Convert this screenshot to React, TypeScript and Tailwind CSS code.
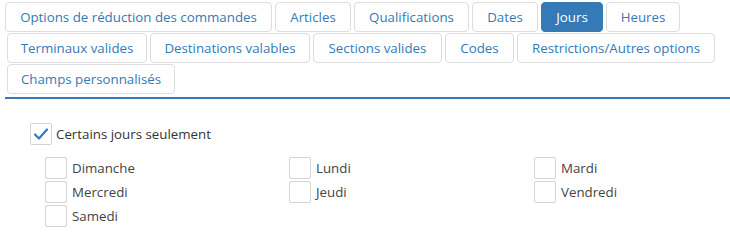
import { useState } from 'react'

const rows = [
    [
        { label: 'Options de réduction des commandes', w: 'w-[267px]' },
        { label: 'Articles', w: 'w-[76px]' },
        { label: 'Qualifications', w: 'w-[115px]' },
        { label: 'Dates', w: 'w-[66px]' },
        { label: 'Jours', w: 'w-[62px]' },
        { label: 'Heures', w: 'w-[74px]' },
    ],
    [
        { label: 'Terminaux valides', w: 'w-[140px]' },
        { label: 'Destinations valables', w: 'w-[160px]' },
        { label: 'Sections valides', w: 'w-[129px]' },
        { label: 'Codes', w: 'w-[69px]' },
        { label: 'Restrictions/Autres options', w: 'w-[198px]' },
    ],
    [{ label: 'Champs personnalisés', w: 'w-[168px]' }],
]

const days = ['Dimanche', 'Lundi', 'Mardi', 'Mercredi', 'Jeudi', 'Vendredi', 'Samedi']

export default function App() {
    const [active, setActive] = useState('Jours')
    const [some, setSome] = useState(true)
    const [checked, setChecked] = useState<Record<string, boolean>>({})

    return (
        <div className="w-[730px] h-[246px] bg-white pt-[2px] pl-[5px] font-['Segoe_UI','Open_Sans','Noto_Sans',sans-serif] text-[13.3px]">
            {/* Tabs */}
            <div className="flex flex-col gap-[1px]">
                {rows.map((row, i) => (
                    <div key={i} className={`flex gap-[3px] ${i > 0 ? 'ml-[2px]' : ''}`}>
                        {row.map(t => (
                            <button
                                key={t.label}
                                onClick={() => setActive(t.label)}
                                className={`${t.w} h-[30px] shrink-0 rounded-[4px] border flex items-center justify-center whitespace-nowrap leading-none pt-[1px] ${
                                    active === t.label
                                        ? 'bg-[#337ab7] border-[#337ab7] text-white'
                                        : 'bg-white border-[#dddddd] text-[#337ab7]'
                                }`}
                            >
                                {t.label}
                            </button>
                        ))}
                    </div>
                ))}
            </div>
            <div className="mt-[3px] h-[2px] bg-[#337ab7]" />

            {/* Contenu */}
            <div className="pt-[24px] pl-[25px]">
                <label className="flex items-center gap-[4px] text-[#333333]">
                    <Box checked={some} onClick={() => setSome(!some)} />
                    <span className="pt-[2px]">Certains jours seulement</span>
                </label>
                <div className="mt-[12px] ml-[15px] grid grid-cols-[244px_245px_1fr] gap-y-[2px]">
                    {days.map(d => (
                        <label key={d} className="flex items-center gap-[5px] text-[#444444]">
                            <Box checked={!!checked[d]} onClick={() => setChecked({ ...checked, [d]: !checked[d] })} />
                            <span className="pt-[2px]">{d}</span>
                        </label>
                    ))}
                </div>
            </div>
        </div>
    )
}

function Box({ checked, onClick }: { checked: boolean; onClick: () => void }) {
    return (
        <span
            onClick={onClick}
            className="w-[22px] h-[22px] shrink-0 rounded-[2px] border border-[#d4d4d4] bg-white flex items-center justify-center"
        >
            {checked && (
                <svg width="16" height="14" viewBox="0 0 16 14" fill="none">
                    <path d="M2 7.5 L6 11.5 L14 2.5" stroke="#2f7bc4" strokeWidth="2.2" strokeLinecap="round" strokeLinejoin="round" />
                </svg>
            )}
        </span>
    )
}
